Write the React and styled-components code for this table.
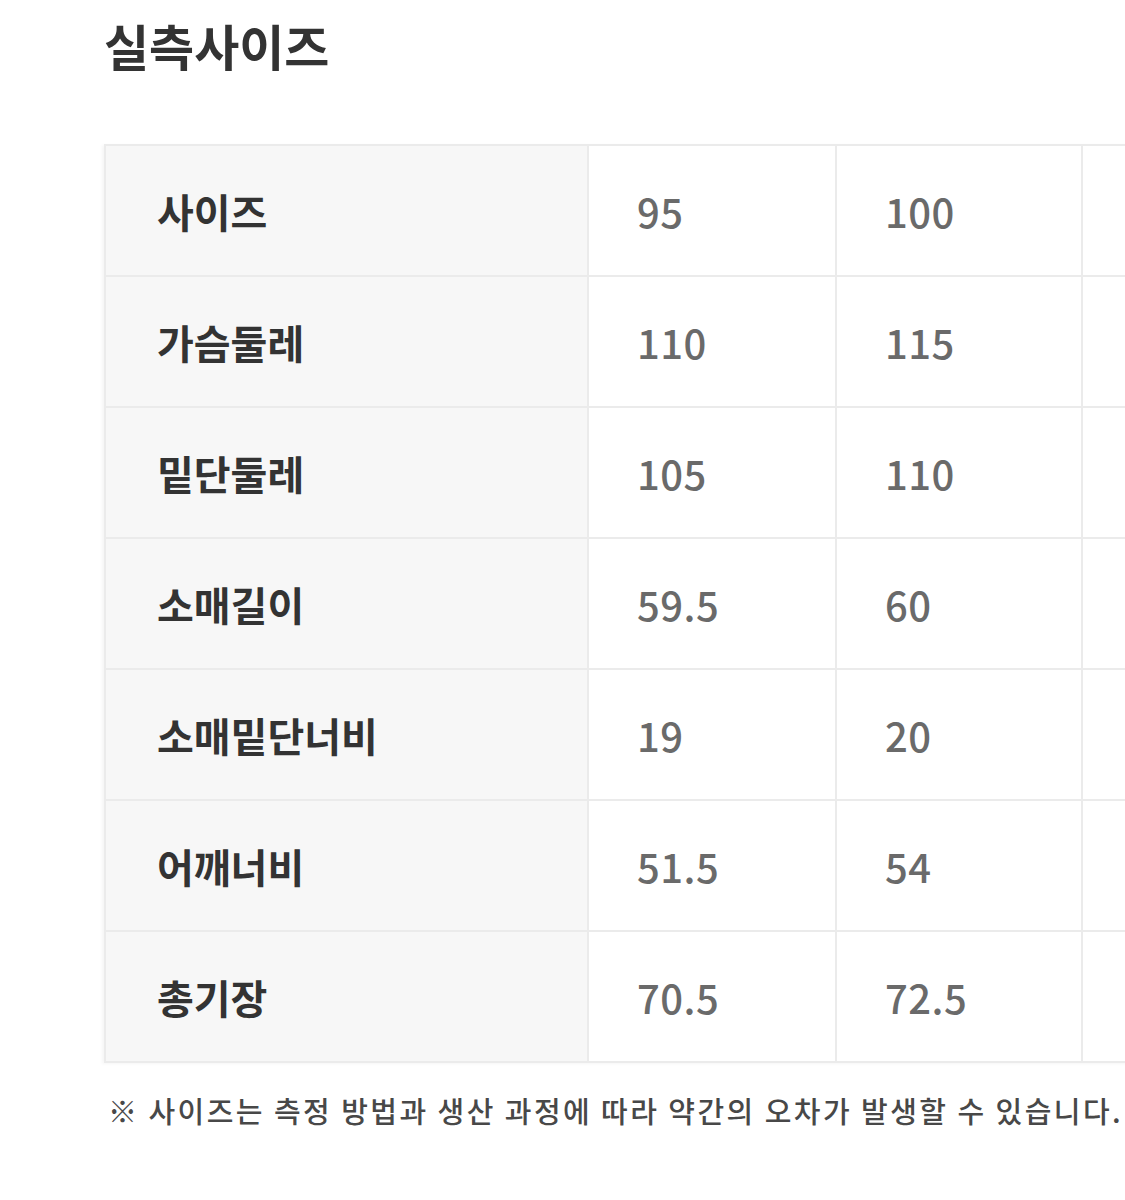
import React from 'react'
import styled, { createGlobalStyle } from 'styled-components'

const GlobalStyle = createGlobalStyle`
  html, body {
    margin: 0;
    padding: 0;
    background: #ffffff;
    overflow: hidden;
  }
  body {
    font-family: "Noto Sans CJK KR", "Noto Sans", sans-serif;
  }
`

const Page = styled.div`
  width: 1125px;
  height: 1200px;
  overflow: hidden;
  padding: 18px 0 0 104px;
  box-sizing: border-box;
`

const Title = styled.h2`
  margin: 0;
  font-size: 49px;
  line-height: 54px;
  font-weight: 700;
  color: #333;
  letter-spacing: 0;
`

const Table = styled.div`
  margin-top: 72px;
  display: grid;
  grid-template-columns: 481px 246px 244px 246px 246px;
  width: max-content;
  background: #ebebeb;
  gap: 2px;
  padding: 2px;
  box-shadow: -2px 1px 3px rgba(0, 0, 0, 0.04);
`

const Cell = styled.div`
  height: 129px;
  display: flex;
  align-items: center;
  box-sizing: border-box;
  padding-left: ${p => (p.$head ? '51px' : '48px')};
  background: ${p => (p.$head ? '#f7f7f7' : '#ffffff')};
  color: ${p => (p.$head ? '#333' : '#6a6a6a')};
  font-size: 40px;
  font-weight: ${p => (p.$head ? 700 : 500)};
  letter-spacing: ${p => (p.$head ? '0' : '0.5px')};
`

const Note = styled.p`
  margin: 30px 0 0 4px;
  font-size: 29px;
  line-height: 34px;
  font-weight: 500;
  color: #484848;
  white-space: nowrap;
  letter-spacing: 2.45px;
`

const rows = [
  ['사이즈', '95', '100', '105', '110'],
  ['가슴둘레', '110', '115', '120', '125'],
  ['밑단둘레', '105', '110', '115', '120'],
  ['소매길이', '59.5', '60', '61.5', '62'],
  ['소매밑단너비', '19', '20', '21', '22'],
  ['어깨너비', '51.5', '54', '55.5', '57'],
  ['총기장', '70.5', '72.5', '74.5', '76.5'],
]

export default function App() {
  return (
    <Page>
      <GlobalStyle />
      <Title>실측사이즈</Title>
      <Table>
        {rows.map(row =>
          row.map((v, i) => (
            <Cell key={row[0] + i} $head={i === 0}>
              {v}
            </Cell>
          ))
        )}
      </Table>
      <Note>※ 사이즈는 측정 방법과 생산 과정에 따라 약간의 오차가 발생할 수 있습니다.</Note>
    </Page>
  )
}
